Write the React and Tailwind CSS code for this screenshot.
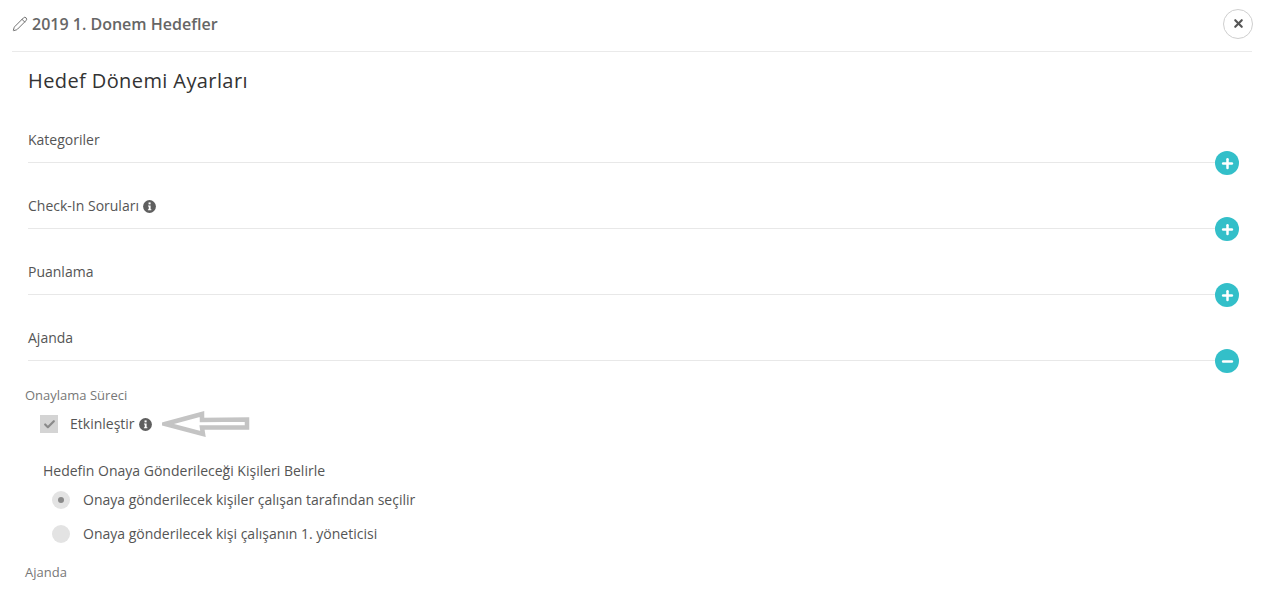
import { Pencil, X, Plus, Minus, Check } from "lucide-react";

const font = "font-['Open_Sans',sans-serif]";

function InfoIcon() {
  return (
    <svg viewBox="0 0 14 14" className="ml-1 h-[13px] w-[13px] shrink-0">
      <circle cx="7" cy="7" r="6.9" fill="#5f5f5f" />
      <rect x="6" y="2.6" width="2.2" height="2.1" fill="#fff" />
      <path d="M5.4 5.8h2.8v4.1h.8v1.2H5.3V9.9h.9V7H5.4z" fill="#fff" />
    </svg>
  );
}

function Section({ title, info, open }) {
  return (
    <div className="relative mr-[12px] flex h-[66px] items-end border-b border-[#e8e8e8] pb-3">
      <div className="flex h-5 items-center text-sm leading-5 text-[#555]">
        {title}
        {info && <InfoIcon />}
      </div>
      <button className="absolute -bottom-[13px] -right-[11px] flex h-6 w-6 items-center justify-center rounded-full bg-[#33bfc9] text-white">
        {open ? <Minus size={15} strokeWidth={4} /> : <Plus size={15} strokeWidth={4} />}
      </button>
    </div>
  );
}

function Radio({ label, selected }) {
  return (
    <div className="flex h-[34px] items-center pl-[52px]">
      <span className="flex h-[18px] w-[18px] items-center justify-center rounded-full bg-[#e3e3e3]">
        {selected && <span className="h-1.5 w-1.5 rounded-full bg-[#8a8a8a]" />}
      </span>
      <span className="ml-[13px] text-sm text-[#555]">{label}</span>
    </div>
  );
}

export default function App() {
  return (
    <div className={`${font} h-[592px] w-[1268px] overflow-hidden bg-white`}>
      <div className="ml-3 mr-4 flex h-[52px] items-center justify-between border-b border-[#eaeaea] pb-1">
        <div className="flex items-center text-base font-semibold text-[#666]">
          <Pencil size={16} strokeWidth={1.4} className="mr-1 text-[#666]" />
          2019 1. Donem Hedefler
        </div>
        <button className="-mr-px flex h-[30px] w-[30px] items-center justify-center rounded-full border border-[#cfcfcf] text-[#555]">
          <X size={13} strokeWidth={4} />
        </button>
      </div>

      <div className="px-7">
        <h1 className="h-[45px] pt-[15px] text-[20px] font-medium leading-[27px] tracking-[0.4px] text-[#333]">Hedef Dönemi Ayarları</h1>
        <div>
          <Section title="Kategoriler" />
          <Section title="Check-In Soruları" info />
          <Section title="Puanlama" />
          <Section title="Ajanda" open />
        </div>
      </div>

      <div className="pl-[25px] pt-[25px] text-[13px] leading-[18px] text-[#777]">Onaylama Süreci</div>

      <div className="mt-[8px] flex h-[24px] items-center pl-[40px]">
        <span className="flex h-[18px] w-[18px] items-center justify-center bg-[#d4d4d4] text-[#8a8a8a]">
          <Check size={13} strokeWidth={4} />
        </span>
        <span className="ml-3 text-sm text-[#555]">Etkinleştir</span>
        <InfoIcon />
        <svg viewBox="0 0 90 26" className="ml-[10px] h-[26px] w-[90px]">
          <path d="M3 13 L40 3 L40 9 L85 8.5 L85 16.5 L40 16.5 L41 23 Z" fill="#fff" stroke="#c4c4c4" strokeWidth="4.5" />
        </svg>
      </div>

      <div className="mt-[26px] pl-[43px] text-sm leading-[18px] text-[#555]">Hedefin Onaya Gönderileceği Kişileri Belirle</div>

      <div className="mt-[3px]">
        <Radio label="Onaya gönderilecek kişiler çalışan tarafından seçilir" selected />
        <Radio label="Onaya gönderilecek kişi çalışanın 1. yöneticisi" />
      </div>

      <div className="pl-[25px] pt-[12px] text-[13px] leading-[18px] text-[#777]">Ajanda</div>
    </div>
  );
}
